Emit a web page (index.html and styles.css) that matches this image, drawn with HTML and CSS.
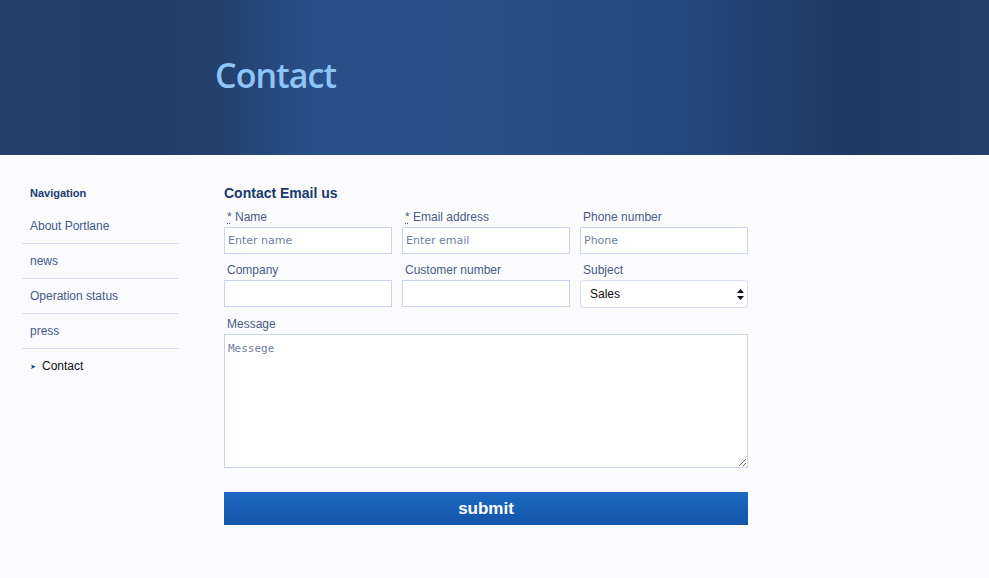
FILE: index.html
```html
<!DOCTYPE html>
<html lang="en">
<head>
    <meta charset="UTF-8">
    <meta name="viewport" content="width=device-width, initial-scale=1.0">
    <title>Contact</title>
    <link rel="stylesheet" href="styles.css">
</head>
<body>
    <header class="banner">
        <h1>Contact</h1>
    </header>

    <div class="page">
        <nav class="sidenav">
            <h4>Navigation</h4>
            <ul>
                <li><a href="#">About Portlane</a></li>
                <li><a href="#">news</a></li>
                <li><a href="#">Operation status</a></li>
                <li><a href="#">press</a></li>
                <li class="active"><a href="#"><span class="arrow">&#10148;</span>Contact</a></li>
            </ul>
        </nav>

        <form class="contact-form">
            <h2>Contact Email us</h2>
            <div class="form-row">
                <div class="field">
                    <label><abbr title="required">*</abbr> Name</label>
                    <input type="text" placeholder="Enter name">
                </div>
                <div class="field">
                    <label><abbr title="required">*</abbr> Email address</label>
                    <input type="email" placeholder="Enter email">
                </div>
                <div class="field">
                    <label>Phone number</label>
                    <input type="text" placeholder="Phone">
                </div>
            </div>
            <div class="form-row">
                <div class="field">
                    <label>Company</label>
                    <input type="text">
                </div>
                <div class="field">
                    <label>Customer number</label>
                    <input type="text">
                </div>
                <div class="field">
                    <label>Subject</label>
                    <div class="select-wrap">
                        <select>
                            <option>Sales</option>
                            <option>Support</option>
                            <option>Billing</option>
                        </select>
                        <svg class="select-arrows" width="7" height="11" viewBox="0 0 7 11">
                            <path d="M3.5 0 L7 4 L0 4 Z M0 7 L7 7 L3.5 11 Z" fill="#111"/>
                        </svg>
                    </div>
                </div>
            </div>
            <div class="field message">
                <label>Message</label>
                <textarea placeholder="Messege"></textarea>
            </div>
            <button type="submit" class="submit">submit</button>
        </form>
    </div>
</body>
</html>
```

FILE: styles.css
```css
body {
    margin: 0;
    font-family: "Liberation Sans", Arial, sans-serif;
    background: #fbfbfe;
    color: #4b5b85;
}

.banner {
    height: 155px;
    background: linear-gradient(90deg, #22406a 0%, #213e68 15%, #233f6a 21%, #27508a 32%, #28518b 45%, #264c83 58%, #24477c 70%, #213f6c 80%, #1f3a63 86%, #203d67 92%, #22406b 100%);
    box-sizing: border-box;
    padding-left: 215px;
    padding-top: 53px;
}

.banner h1 {
    margin: 0;
    font-family: "Open Sans", sans-serif;
    font-weight: 600;
    font-size: 34px;
    letter-spacing: -0.9px;
    line-height: 44px;
    color: #8fc4f6;
}

.page {
    display: flex;
    padding: 23px 0 0 22px;
}

.sidenav {
    width: 157px;
}

.sidenav h4 {
    margin: 0;
    padding-left: 8px;
    font-size: 11px;
    font-weight: bold;
    line-height: 31px;
    color: #1c3a72;
}

.sidenav ul {
    list-style: none;
    margin: 0;
    padding: 0;
}

.sidenav li {
    border-bottom: 1px solid #d6def2;
}

.sidenav li.active {
    border-bottom: none;
}

.sidenav a {
    display: block;
    padding-left: 8px;
    line-height: 34px;
    font-size: 12px;
    color: #44598a;
    text-decoration: none;
}

.sidenav li.active a {
    color: #111;
}

.arrow {
    font-size: 7px;
    color: #1c3a72;
    margin-right: 6px;
    vertical-align: 1px;
}

.contact-form {
    width: 524px;
    margin-left: 45px;
}

.contact-form h2 {
    margin: 0;
    font-size: 14px;
    font-weight: bold;
    line-height: 31px;
    color: #173a70;
}

.form-row {
    display: flex;
    gap: 10px;
    margin-bottom: 8px;
}

.field {
    flex: 1;
    display: flex;
    flex-direction: column;
}

.field label {
    font-size: 12px;
    line-height: 16px;
    padding-left: 3px;
    margin-bottom: 2px;
    color: #4b5b85;
}

.field abbr {
    text-decoration: underline dotted;
    text-underline-offset: 2px;
    font-size: 12px;
}

.field input {
    height: 27px;
    box-sizing: border-box;
    border: 1px solid #c9d3f0;
    background: #fff;
    padding: 0 3px;
    font-family: "DejaVu Sans", Verdana, sans-serif;
    font-size: 11px;
    color: #333;
    outline: none;
}

.field input::placeholder,
.field textarea::placeholder {
    color: #6f7fa3;
}

.select-wrap {
    position: relative;
}

.select-wrap select {
    width: 100%;
    height: 28px;
    box-sizing: border-box;
    border: 1px solid #d3dbf1;
    border-radius: 4px;
    background: #fff;
    padding: 0 9px;
    font-family: "Liberation Sans", Arial, sans-serif;
    font-size: 12px;
    color: #111;
    appearance: none;
    -webkit-appearance: none;
    outline: none;
}

.select-arrows {
    position: absolute;
    right: 4px;
    top: 9px;
    pointer-events: none;
}

.field.message {
    margin-top: 1px;
}

.field textarea {
    height: 134px;
    box-sizing: border-box;
    border: 1px solid #c9d3f0;
    background: #fff;
    padding: 7px 3px;
    font-family: "DejaVu Sans Mono", monospace;
    font-size: 11px;
    resize: vertical;
    outline: none;
}

.submit {
    display: block;
    width: 100%;
    height: 33px;
    margin-top: 24px;
    border: none;
    background: linear-gradient(180deg, #1d68c3, #1456a9);
    color: #fff;
    font-family: "Liberation Sans", Arial, sans-serif;
    font-size: 17px;
    font-weight: bold;
    cursor: pointer;
}
```
